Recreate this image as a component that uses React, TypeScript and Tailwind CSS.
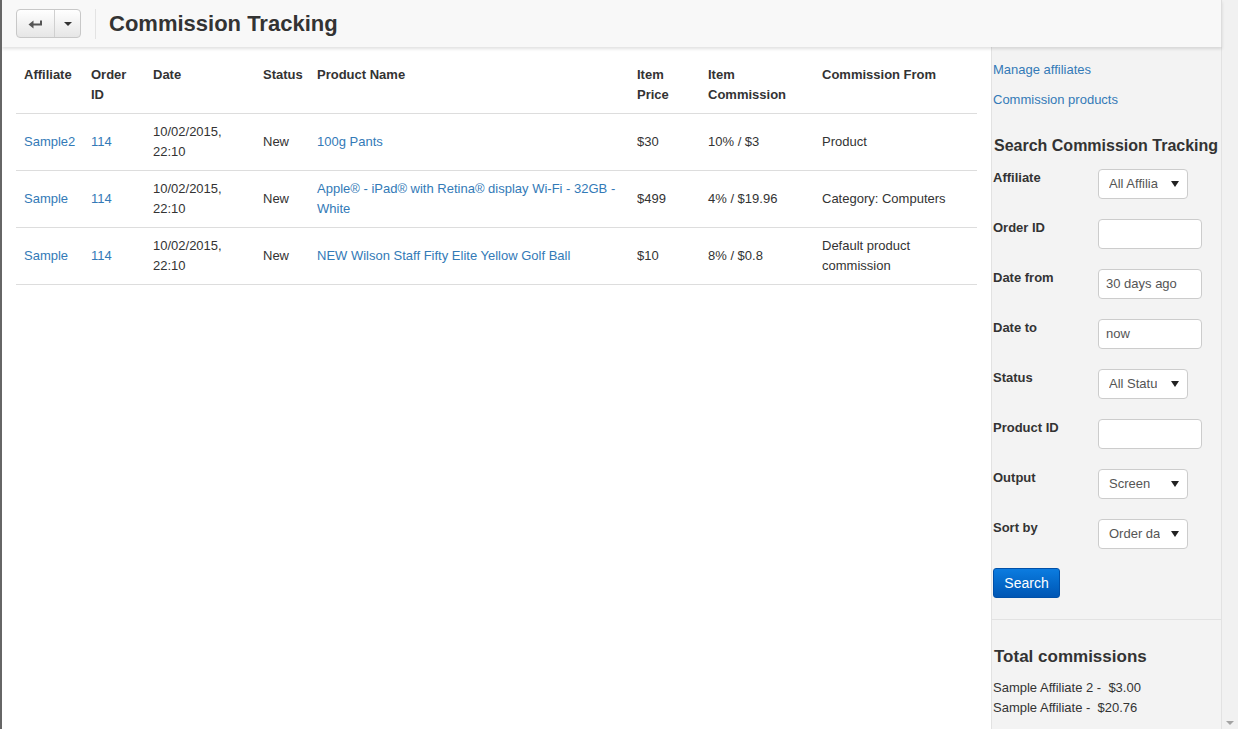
import React from "react";

const rows = [
  { affiliate: "Sample2", order: "114", product: "100g Pants", price: "$30", commission: "10% / $3", from: "Product" },
  { affiliate: "Sample", order: "114", product: "Apple® - iPad® with Retina® display Wi-Fi - 32GB - White", price: "$499", commission: "4% / $19.96", from: "Category: Computers" },
  { affiliate: "Sample", order: "114", product: "NEW Wilson Staff Fifty Elite Yellow Golf Ball", price: "$10", commission: "8% / $0.8", from: "Default product commission" },
];

const fields = [
  { label: "Affiliate", kind: "select", value: "All Affilia" },
  { label: "Order ID", kind: "input", value: "" },
  { label: "Date from", kind: "input", value: "30 days ago" },
  { label: "Date to", kind: "input", value: "now" },
  { label: "Status", kind: "select", value: "All Statu" },
  { label: "Product ID", kind: "input", value: "" },
  { label: "Output", kind: "select", value: "Screen" },
  { label: "Sort by", kind: "select", value: "Order da" },
];

function BackIcon() {
  return (
    <svg width="15" height="12" viewBox="0 0 15 12" fill="none">
      <path d="M13 2.5 V6.5 H4.5" stroke="#555" strokeWidth="2" />
      <path d="M0.5 6.5 L5.5 2.5 V10.5 Z" fill="#555" />
    </svg>
  );
}

export default function App() {
  return (
    <div className="flex h-[729px] w-full overflow-hidden border-l-2 border-[#666] bg-white text-[#333]" style={{ fontFamily: '"Liberation Sans", Arial, sans-serif' }}>
      <div className="flex flex-1 flex-col">
        {/* Header */}
        <header className="relative z-10 flex h-[47px] items-center border-r border-[#ddd] bg-[#f8f8f8] pl-[14px] shadow-[0_2px_3px_rgba(0,0,0,0.12)]">
          <div className="flex h-[29px] overflow-hidden rounded-[4px] border border-[#c8c8c8] bg-gradient-to-b from-white to-[#e6e6e6]">
            <button className="flex w-[38px] items-center justify-center border-r border-[#d0d0d0]">
              <BackIcon />
            </button>
            <button className="flex w-[25px] items-center justify-center">
              <span className="block h-0 w-0 border-x-[4px] border-t-[4px] border-x-transparent border-t-[#333]" />
            </button>
          </div>
          <div className="ml-[14px] h-[30px] w-px bg-[#e3e3e3]" />
          <h1 className="ml-[13px] text-[22px] font-bold text-[#333]">Commission Tracking</h1>
        </header>

        <div className="flex flex-1">
          {/* Table */}
          <main className="flex-1 px-[14px] pt-[10px]">
            <table className="w-[961px] table-fixed border-collapse text-[13px] leading-5">
              <colgroup>
                <col className="w-[67px]" />
                <col className="w-[62px]" />
                <col className="w-[110px]" />
                <col className="w-[54px]" />
                <col className="w-[320px]" />
                <col className="w-[71px]" />
                <col className="w-[114px]" />
                <col />
              </colgroup>
              <thead>
                <tr className="border-b border-[#ddd] text-left align-top">
                  <th className="px-2 py-2 font-bold">Affiliate</th>
                  <th className="px-2 py-2 font-bold">Order ID</th>
                  <th className="px-2 py-2 font-bold">Date</th>
                  <th className="px-2 py-2 font-bold">Status</th>
                  <th className="px-2 py-2 font-bold">Product Name</th>
                  <th className="px-2 py-2 font-bold">Item Price</th>
                  <th className="px-2 py-2 font-bold">Item Commission</th>
                  <th className="px-2 py-2 font-bold">Commission From</th>
                </tr>
              </thead>
              <tbody>
                {rows.map((r, i) => (
                  <tr key={i} className="h-[57px] border-b border-[#ddd] align-middle">
                    <td className="px-2 py-2 text-[#337ab7]">{r.affiliate}</td>
                    <td className="px-2 py-2 text-[#337ab7]">{r.order}</td>
                    <td className="px-2 py-2">10/02/2015,<br />22:10</td>
                    <td className="px-2 py-2">New</td>
                    <td className="px-2 py-2 text-[#337ab7]">{r.product}</td>
                    <td className="px-2 py-2">{r.price}</td>
                    <td className="px-2 py-2">{r.commission}</td>
                    <td className="px-2 py-2">{r.from}</td>
                  </tr>
                ))}
              </tbody>
            </table>
          </main>

          {/* Sidebar */}
          <aside className="flex w-[231px] flex-col border-x border-[#e2e2e2] bg-[#f3f3f3] text-[13px]">
            <div className="flex flex-col gap-[10px] pl-[1px] pt-[13px] leading-5 text-[#337ab7]">
              <a>Manage affiliates</a>
              <a>Commission products</a>
            </div>
            <h2 className="mt-[26px] whitespace-nowrap pl-[2px] text-[16px] font-bold leading-5">Search Commission Tracking</h2>
            <div className="mt-[13px] flex flex-col gap-[20px] pl-[1px]">
              {fields.map((f) => (
                <div key={f.label} className="flex h-[30px]">
                  <label className="w-[105px] pt-[1px] font-bold leading-4">{f.label}</label>
                  {f.kind === "select" ? (
                    <div className="flex h-[30px] w-[90px] items-center justify-between rounded-[4px] border border-[#ccc] bg-white pl-[10px] pr-[8px] text-[#555]">
                      <span className="overflow-hidden whitespace-nowrap">{f.value}</span>
                      <span className="ml-1 block h-0 w-0 shrink-0 border-x-[4px] border-t-[6px] border-x-transparent border-t-[#222]" />
                    </div>
                  ) : (
                    <div className="flex h-[30px] w-[104px] items-center rounded-[4px] border border-[#ccc] bg-white px-[7px] text-[#555]">
                      {f.value}
                    </div>
                  )}
                </div>
              ))}
            </div>
            <div className="pl-[1px] pt-[19px]">
              <button className="h-[30px] w-[67px] rounded-[3px] border border-[#0050a8] bg-gradient-to-b from-[#0c7ce0] to-[#0056b4] text-[14px] text-white">Search</button>
            </div>
            <div className="mt-[21px] border-t border-[#e2e2e2]" />
            <h2 className="mt-[27px] pl-[2px] text-[17px] font-bold leading-5">Total commissions</h2>
            <div className="mt-[11px] pl-[1px] leading-5">
              <div>Sample Affiliate 2 -&nbsp; $3.00</div>
              <div>Sample Affiliate -&nbsp; $20.76</div>
            </div>
          </aside>
        </div>
      </div>

      {/* Scrollbar */}
      <div className="flex w-[16px] flex-col justify-end bg-[#f1f1f1] pb-[4px]">
        <span className="mx-auto block h-0 w-0 border-x-[4px] border-t-[4px] border-x-transparent border-t-[#a3a3a3]" />
      </div>
    </div>
  );
}
